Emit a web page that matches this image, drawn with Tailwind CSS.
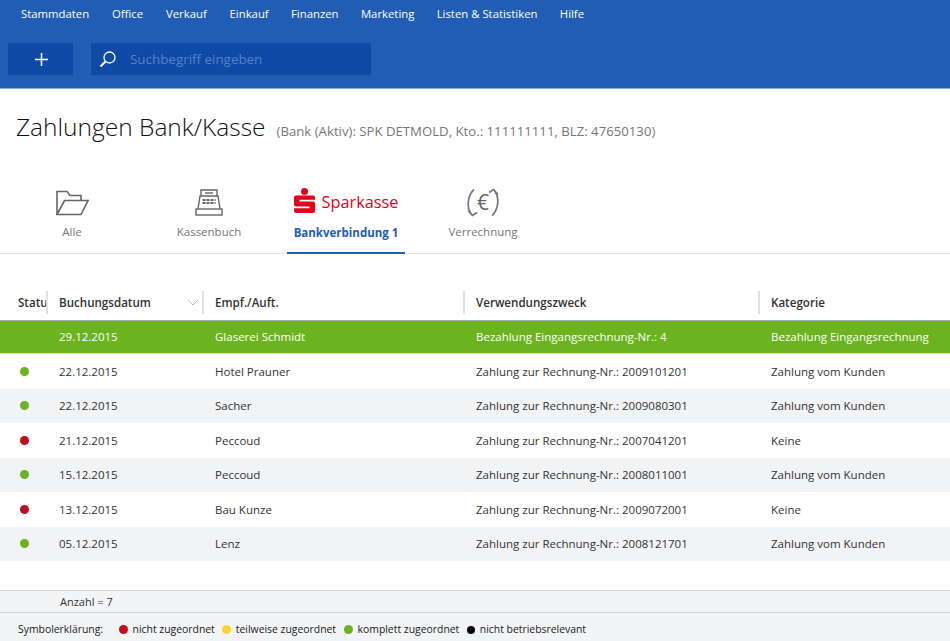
<!DOCTYPE html>
<html lang="de">
<head>
    <meta charset="UTF-8">
    <title>Zahlungen Bank/Kasse</title>
    <script src="https://cdn.jsdelivr.net/npm/@tailwindcss/browser@4"></script>
</head>
<body class="w-[950px] h-[641px] overflow-hidden bg-white font-['Open_Sans','Noto_Sans',sans-serif] text-[11.5px] text-[#333]">
    <!-- Header -->
    <header class="h-[89px] bg-[#215cb5] border-b border-[#7fa6dc]">
        <nav class="flex h-[28px] items-center gap-[22.3px] pl-[21px] text-[11.35px] text-white">
            <a>Stammdaten</a><a class="ml-[0.5px]">Office</a><a class="ml-[0.5px]">Verkauf</a><a class="ml-[0.5px]">Einkauf</a><a>Finanzen</a><a>Marketing</a><a>Listen &amp; Statistiken</a><a>Hilfe</a>
        </nav>
        <div class="mt-[15px] flex gap-[18px] pl-[8px]">
            <button class="flex h-[32px] w-[65px] items-center justify-center bg-[#0f4aa6] pl-[1px]">
                <svg width="13" height="13" viewBox="0 0 13 13"><path d="M6.5 0v13M0 6.5h13" stroke="#fff" stroke-width="1.5"/></svg>
            </button>
            <div class="flex h-[32px] w-[280px] items-center bg-[#0f4aa6] pl-[8px]">
                <svg width="18" height="18" viewBox="0 0 18 18" fill="none" stroke="#fff"><circle cx="10.5" cy="7.5" r="5.5" stroke-width="1.3"/><path d="M6.5 11.5 1.5 16.5" stroke-width="2.2"/></svg>
                <span class="ml-[13px] pt-[1px] text-[13.4px] text-[#5682c6]">Suchbegriff eingeben</span>
            </div>
        </div>
    </header>

    <!-- Title -->
    <div class="flex h-[78px] items-baseline pl-[16px] pt-[21px]">
        <h1 class="text-[24.5px] font-light leading-[34px] text-[#111]">Zahlungen Bank/Kasse</h1>
        <span class="ml-[11px] text-[13.2px] leading-[30px] text-[#777]">(Bank (Aktiv): SPK DETMOLD, Kto.: 111111111, BLZ: 47650130)</span>
    </div>

    <!-- Tabs -->
    <div class="flex h-[87px] border-b border-[#e3e3e3] text-[11.5px] text-[#777]">
        <div class="flex w-[144px] flex-col items-center pt-[23px]">
            <svg width="35" height="26" viewBox="0 0 35 26" fill="none" stroke="#666" stroke-width="1.6"><path d="M2 24.5V1.5h10l3 4h11v5"/><path d="M2 24.5h24l7-14H9.500z"/></svg>
            <span class="mt-[7px]">Alle</span>
        </div>
        <div class="flex w-[130px] flex-col items-center pt-[22px]">
            <svg width="28" height="27" viewBox="0 0 28 27" fill="none" stroke="#666" stroke-width="1.4"><path d="M6 7V1h16v6"/><path d="M10 4h8"/><path d="M3 20 5 7h18l2 13"/><rect x="1" y="20" width="26" height="6"/><path d="M7.500 11h13M7.500 14h13" stroke-width="2" stroke-dasharray="3 1"/></svg>
            <span class="mt-[7px]">Kassenbuch</span>
        </div>
        <div class="ml-[13px] flex h-[87px] w-[118px] flex-col items-center border-b-2 border-[#215cb5] pt-[20px]">
            <div class="flex h-[27px] items-center gap-[7px] text-[#e2001a]">
                <svg width="21" height="25" viewBox="0 0 21 25" fill="#e2001a"><circle cx="10.500" cy="3.500" r="3.500"/><path d="M2 7.500h17a2 2 0 0 1 2 2v2.300H5.500v1.600H19a2 2 0 0 1 2 2V23a2 2 0 0 1-2 2H2a2 2 0 0 1-2-2v-2.800h15.500v-1.600H2a2 2 0 0 1-2-2V9.500a2 2 0 0 1 2-2z"/></svg>
                <span class="mt-[4px] text-[16.3px] leading-none">Sparkasse</span>
            </div>
            <span class="mt-[10px] font-bold text-[#215cb5]">Bankverbindung 1</span>
        </div>
        <div class="flex w-[156px] flex-col items-center pt-[20px]">
            <svg width="34" height="31" viewBox="0 0 34 31" fill="none" stroke="#777" stroke-width="1.7">
                <path d="M8 2.500C2 8 -0.500 20 6 28"/><path d="M2 23.500l4.500 5 4.500-3"/>
                <path d="M26 28.500C32 23 34.500 11 28 3"/><path d="M32 7.500l-4.500-5-4.500 3"/>
                <text x="17" y="22.500" text-anchor="middle" font-size="21" fill="#666" stroke="none">€</text>
            </svg>
            <span class="mt-[5px]">Verrechnung</span>
        </div>
    </div>

    <!-- Table -->
    <div class="mt-[31px]">
        <div class="grid h-[36px] grid-cols-[48px_156px_261px_295px_190px] items-center border-b border-[#aaa] text-[11.6px] font-semibold whitespace-nowrap [&>div]:flex [&>div]:h-[23px] [&>div]:items-center [&>div]:border-r-2 [&>div]:border-[#e0e0e0] [&>div]:pl-[11px]">
            <div class="overflow-hidden !pl-[18px]">Status</div>
            <div class="justify-between pr-[3px]">Buchungsdatum
                <svg width="12" height="7" viewBox="0 0 12 7" fill="none" stroke="#bbb"><path d="M1 1l5 5 5-5"/></svg>
            </div>
            <div>Empf./Auft.</div>
            <div>Verwendungszweck</div>
            <div class="!border-r-0">Kategorie</div>
        </div>

        <div class="grid h-[33px] grid-cols-[47px_156px_261px_295px_191px] items-center border-b border-[#ddd] bg-[#6bb31f] text-white [&>div]:pl-[12px]">
            <div></div><div>29.12.2015</div><div>Glaserei Schmidt</div><div>Bezahlung Eingangsrechnung-Nr.: 4</div><div class="whitespace-nowrap">Bezahlung Eingangsrechnung</div>
        </div>

        <div class="grid h-[34.5px] grid-cols-[47px_156px_261px_295px_191px] items-center [&>div]:pl-[12px]">
            <div class="!pl-[20px]"><span class="block h-[9px] w-[9px] rounded-full bg-[#6bb31f]"></span></div><div>22.12.2015</div><div>Hotel Prauner</div><div>Zahlung zur Rechnung-Nr.: 2009101201</div><div>Zahlung vom Kunden</div>
        </div>
        <div class="grid h-[34.5px] grid-cols-[47px_156px_261px_295px_191px] items-center bg-[#f2f3f5] [&>div]:pl-[12px]">
            <div class="!pl-[20px]"><span class="block h-[9px] w-[9px] rounded-full bg-[#6bb31f]"></span></div><div>22.12.2015</div><div>Sacher</div><div>Zahlung zur Rechnung-Nr.: 2009080301</div><div>Zahlung vom Kunden</div>
        </div>
        <div class="grid h-[34.5px] grid-cols-[47px_156px_261px_295px_191px] items-center [&>div]:pl-[12px]">
            <div class="!pl-[20px]"><span class="block h-[9px] w-[9px] rounded-full bg-[#c00d1e]"></span></div><div>21.12.2015</div><div>Peccoud</div><div>Zahlung zur Rechnung-Nr.: 2007041201</div><div>Keine</div>
        </div>
        <div class="grid h-[34.5px] grid-cols-[47px_156px_261px_295px_191px] items-center bg-[#f2f3f5] [&>div]:pl-[12px]">
            <div class="!pl-[20px]"><span class="block h-[9px] w-[9px] rounded-full bg-[#6bb31f]"></span></div><div>15.12.2015</div><div>Peccoud</div><div>Zahlung zur Rechnung-Nr.: 2008011001</div><div>Zahlung vom Kunden</div>
        </div>
        <div class="grid h-[34.5px] grid-cols-[47px_156px_261px_295px_191px] items-center [&>div]:pl-[12px]">
            <div class="!pl-[20px]"><span class="block h-[9px] w-[9px] rounded-full bg-[#c00d1e]"></span></div><div>13.12.2015</div><div>Bau Kunze</div><div>Zahlung zur Rechnung-Nr.: 2009072001</div><div>Keine</div>
        </div>
        <div class="grid h-[34.5px] grid-cols-[47px_156px_261px_295px_191px] items-center bg-[#f2f3f5] [&>div]:pl-[12px]">
            <div class="!pl-[20px]"><span class="block h-[9px] w-[9px] rounded-full bg-[#6bb31f]"></span></div><div>05.12.2015</div><div>Lenz</div><div>Zahlung zur Rechnung-Nr.: 2008121701</div><div>Zahlung vom Kunden</div>
        </div>
    </div>

    <!-- Footer -->
    <div class="mt-[29px] flex h-[23px] items-center border-y border-[#d4d4d6] bg-[#f3f4f6] pl-[60px] pt-[2px] text-[11px]">Anzahl = 7</div>
    <div class="flex h-[29px] items-center bg-[#f3f4f6] pl-[18px] pt-[4px] text-[10.4px] text-[#222]">
        <span class="mr-[15.500px]">Symbolerklärung:</span>
        <span class="mr-[5px] h-[9px] w-[9px] rounded-full bg-[#c00d1e]"></span><span class="mr-[7px]">nicht zugeordnet</span>
        <span class="mr-[5px] h-[9px] w-[9px] rounded-full bg-[#fdd22e]"></span><span class="mr-[7.500px]">teilweise zugeordnet</span>
        <span class="mr-[5px] h-[9px] w-[9px] rounded-full bg-[#6bb31f]"></span><span class="mr-[7.500px]">komplett zugeordnet</span>
        <span class="mr-[5px] h-[8px] w-[8px] rounded-full bg-black"></span><span>nicht betriebsrelevant</span>
    </div>
</body>
</html>
